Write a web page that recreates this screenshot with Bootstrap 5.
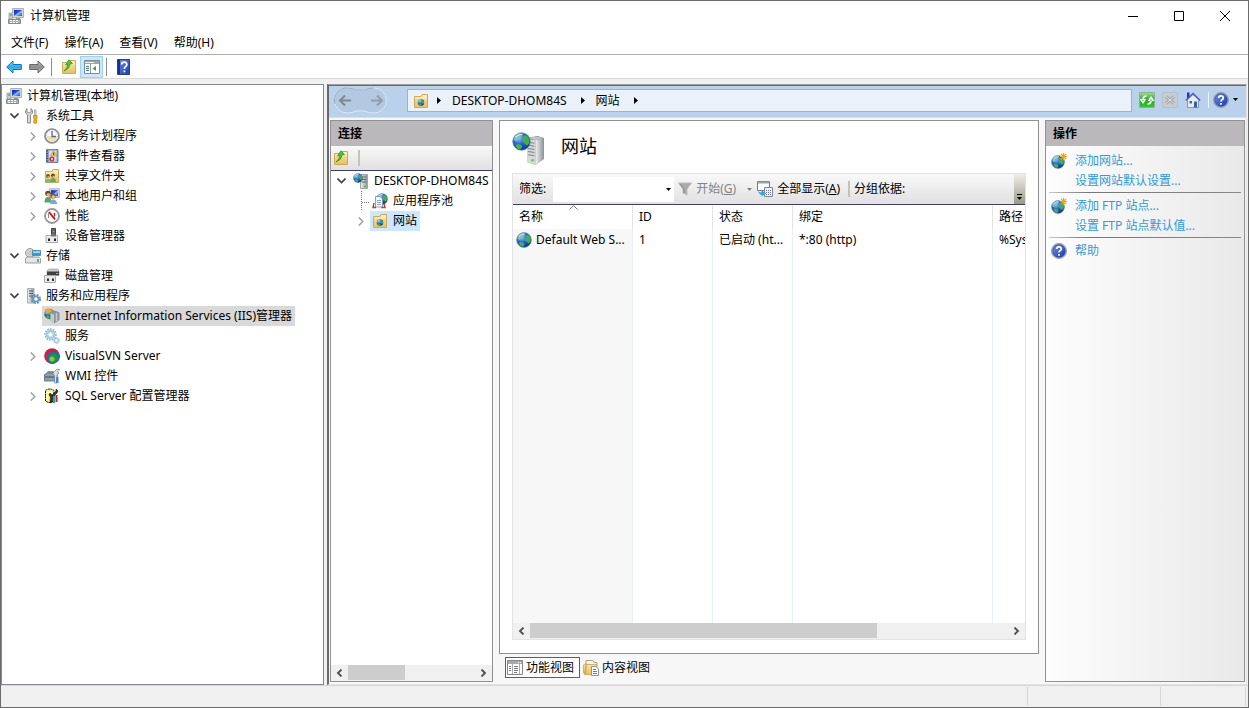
<!DOCTYPE html>
<html lang="zh-CN">
<head>
<meta charset="utf-8">
<meta name="viewport" content="width=device-width, initial-scale=1">
<title>计算机管理</title>
<link rel="stylesheet" href="https://cdn.jsdelivr.net/npm/bootstrap@5.3.0/dist/css/bootstrap.min.css">
<style>
  body { font: 12px/20px "Noto Sans", "Noto Sans CJK SC", sans-serif; color: #000; background: #fff; }
  button, select { font: inherit; color: inherit; background: none; border: 0; padding: 0; border-radius: 0; }
  a { color: inherit; text-decoration: none; }
  ul { list-style: none; margin: 0; padding: 0; }
  svg { display: block; flex: none; }
  .ico { width: 16px; height: 16px; }
  .app { height: 100vh; border: 1px solid #6b6b6b; background: #f0f0f0; }
  .titlebar { height: 29px; padding-left: 7px; background: #fff; }
  .titlebar .ico { margin-right: 6px; }
  .titlebar button { width: 46px; height: 28px; display: grid; place-items: center; }
  .menubar { height: 25px; padding: 2px 0 0 2px; background: #fff; border-bottom: 1px solid #b0b0b0; }
  .menubar button { padding: 0 8px 0 8px; }
  .toolbar { height: 24px; padding: 1px 0 0 1px; background: #fff; border-bottom: 1px solid #d8d8d8; }
  .toolbar button { width: 23px; height: 22px; display: grid; place-items: center; }
  .toolbar .on { background: #cce8ff; border: 1px solid #99d1ff; }
  .vline { width: 1px; height: 18px; background: #8c8c8c; margin: 0 5px 0 3px; }
  .main { padding-top: 5px; gap: 3px; }
  .tree { width: 323px; padding-top: 1px; border: 1px solid #828790; background: #fff; }
  .node { height: 20px; display: flex; align-items: center; white-space: nowrap; }
  .node .twist { width: 18px; height: 20px; display: grid; place-items: center; flex: none; }
  .node a { display: flex; align-items: center; gap: 5px; height: 20px; padding: 0 3px 0 2px; }
  .lv0 { padding-left: 2px; }
  .lv1 { padding-left: 3px; }
  .lv2 { padding-left: 22px; }
  .lv2.leaf { padding-left: 40px; }
  .picked { background: #d9d9d9; }
  .console { border: solid #a0a0a0; border-width: 1px 1px 1px 2px; border-right-color: #e3e3e3; border-bottom-color: #e3e3e3; border-left-color: #696969; background: #f7f7f7; margin-right: 1px; }
  .addressbar { height: 33px; padding: 0 8px 2px 4px; background: #b9d1ea; border-top: 1px solid #696969; border-bottom: 1px solid #d3dfec; }
  .navpill { width: 55px; margin-right: 19px; }
  .crumbs { height: 23px; padding: 0 5px; background: #eaf1fa; border: 1px solid #9db3cc; }
  .crumbs a { padding: 0 14px 0 11px; }
  .barbtns { gap: 7px; padding: 0 0 2px 7px; }
  .panes { padding: 2px 1px 2px; gap: 6px; }
  .pane { border: 1px solid #919191; background: #fff; }
  .conn { width: 163px; flex: none; }
  .acts { width: 200px; flex: none; background: linear-gradient(90deg, #fdfdfd, #e9e9e9); }
  .panehead { font-size: 12px; line-height: 25px; height: 25px; padding-left: 7px; background: #bab8ba; font-weight: 700; margin: 0; }
  .strip { background: linear-gradient(#f9f9f9, #e2e0e2); border-bottom: 1px solid #3f3d69; }
  .conn .strip { height: 25px; padding: 0 2px; gap: 9px; }
  .sep2 { width: 2px; height: 16px; background: #c5c5ae; }
  .conn .twist { width: 19px; }
  .c0 { padding-left: 1px; }
  .c1 { padding-left: 20px; }
  .here { background: #cce8ff; }
  .sbar { height: 16px; background: #f0f0f0; }
  .sbar button { width: 17px; height: 16px; display: grid; place-items: center; flex: none; }
  .thumb { background: #cdcdcd; height: 15px; }
  .sheet { padding: 11px 12px 13px; }
  .sheet h1 { font-size: 18px; line-height: 26px; margin: 0; font-weight: 400; padding-bottom: 6px; }
  .heading { height: 33px; gap: 16px; margin-bottom: 8px; }
  .gridbox { border: 1px solid #e3e3e3; }
  .gridbox .strip { height: 31px; padding-left: 6px; white-space: nowrap; }
  .filter { width: 121px; height: 25px; background: #fff; margin: 0 4px 0 7px; }
  .filter select { width: 100%; height: 25px; appearance: none; padding: 0 16px 0 4px; }
  .filter svg { right: 3px; top: 11px; pointer-events: none; }
  .dim { color: #838383; }
  .drop { margin: 0 5px 0 11px; }
  .more { width: 11px; background: linear-gradient(#efefea, #9a9a84); }
  .sites { width: 100%; height: 100%; table-layout: fixed; border-collapse: separate; border-spacing: 0; }
  .sites th, .sites td { font-weight: 400; padding: 0 0 0 6px; white-space: nowrap; overflow: hidden; border-right: 1px solid #e5f0fb; vertical-align: middle; }
  .sites th { height: 24px; border-color: #e3e3e3; position: relative; }
  .sites th svg { left: 56px; top: 0; }
  .sites td:first-child { background: #f7f7f7; padding-left: 3px; }
  .sites th:last-child, .sites td:last-child { border-right: 0; }
  .sites .line td { height: 22px; }
  .views { height: 28px; padding: 3px 0 0 6px; gap: 1px; }
  .views button { height: 21px; display: flex; align-items: center; gap: 3px; padding: 0 5px 0 1px; border: 1px solid transparent; }
  .views .on { border-color: #0078d7; background: #fff; }
  .acts ul { padding: 5px 3px; }
  .acts a { display: flex; align-items: center; height: 20px; gap: 8px; padding-left: 2px; color: #3399d8; white-space: nowrap; }
  .acts .sub a { padding-left: 26px; }
  .acts .rule { height: 1px; margin: 1px 0 3px; background: linear-gradient(90deg, #c8c8c8, #777 20%, #888); }
  .status { height: 22px; border-top: 1px solid #d7d7d7; }
  .status span { border-right: 1px solid #d7d7d7; margin: 1px 0; }
  .status .wide { width: 133px; }
  .status .slim { width: 85px; margin-right: 2px; }
</style>
</head>
<body>
<svg width="0" height="0" class="position-absolute" aria-hidden="true">
  <defs>
    <radialGradient id="gsea" cx=".35" cy=".3" r=".8"><stop offset="0" stop-color="#8fc4ff"/><stop offset=".45" stop-color="#2a62dc"/><stop offset="1" stop-color="#0b2a80"/></radialGradient>
    <linearGradient id="gfold" x2="0" y2="1"><stop stop-color="#fbe7a6"/><stop offset="1" stop-color="#e8bf62"/></linearGradient>
    <linearGradient id="gmetal"><stop stop-color="#f1f1f1"/><stop offset="1" stop-color="#8b9298"/></linearGradient>
    <linearGradient id="gscr" x2="1" y2="1"><stop stop-color="#0720b8"/><stop offset=".45" stop-color="#2c55ea"/><stop offset=".55" stop-color="#9cc1ff"/><stop offset="1" stop-color="#1c3fd0"/></linearGradient>
    <linearGradient id="gblue" x2="0" y2="1"><stop stop-color="#8be0ff"/><stop offset=".5" stop-color="#28a9e6"/><stop offset="1" stop-color="#7fd6f8"/></linearGradient>
    <linearGradient id="ggray" x2="0" y2="1"><stop stop-color="#c9c9c9"/><stop offset=".5" stop-color="#8c8c8c"/><stop offset="1" stop-color="#b9b9b9"/></linearGradient>
    <linearGradient id="ghelp" x2="1" y2="1"><stop stop-color="#6d8fe8"/><stop offset="1" stop-color="#1c3aa6"/></linearGradient>
    <linearGradient id="ggreen" x2="0" y2="1"><stop stop-color="#9be58c"/><stop offset=".5" stop-color="#24a520"/><stop offset="1" stop-color="#35c92b"/></linearGradient>
    <symbol id="i-globe" viewBox="0 0 16 16"><circle cx="8" cy="8" r="7.4" fill="url(#gsea)" stroke="#6d87ad" stroke-width=".6"/><path d="M1.500 6 3 3 6 1.300 8.500 2 7.500 4 5.500 5 5 7 3 8Z" fill="#7cc8a4"/><path d="M10 3 12.500 3 14.800 6 14.500 9.500 12.500 11.500 11 10 9 8.500 9 6Z" fill="#3fb04a"/><path d="M4 10 7 10.500 8.500 12.500 7 14.800 4.500 13.800 3 12Z" fill="#45b544"/><path d="M3 4.500Q5.500 1.600 9 1.900" stroke="#e0f5ff" fill="none" opacity=".8"/></symbol>
    <symbol id="i-folder" viewBox="0 0 16 16"><path d="M1.500 3.500H8L9 1.500H14.500V14.500H1.500Z" fill="url(#gfold)" stroke="#cfa956"/><path d="M10 3H14M2.500 5H14" stroke="#fff6d0"/></symbol>
    <symbol id="i-foldglobe" viewBox="0 0 16 16"><use href="#i-folder"/><use href="#i-globe" x="4.500" y="6" width="7" height="7"/></symbol>
    <symbol id="i-up" viewBox="0 0 16 16"><use href="#i-folder"/><path d="M3 12Q7 9 6.500 5.500L4.500 5.700 8 .8 11.500 4.600 9 5Q9 9.500 3 12Z" fill="#43c935" stroke="#248f20" stroke-width=".7"/></symbol>
    <symbol id="i-pc" viewBox="0 0 16 16"><path d="M1 5H5V11H1Z" fill="#c4d1ca" stroke="#87928c" stroke-width=".7"/><path d="M4.500 .5H15.500V9.500H4.500Z" fill="#d9d9d4" stroke="#b2b2ad"/><path d="M6 2H14V8H6Z" fill="url(#gscr)"/><path d="M8 10H12L13 12H7Z" fill="#9a9a95"/><path d="M.5 11.500H12.500V15.500H.5Z" fill="#a5b1b7" stroke="#7e8b92"/><path d="M2 12.500H11M2 14.500H11" stroke="#fff" stroke-dasharray="2 1"/><path d="M2 7H4" stroke="#2d9b32"/></symbol>
    <symbol id="i-tools" viewBox="0 0 16 16"><path d="M2 .5V4L4 5 6 4V.5L7.500 2.500V5L5.500 7V15H2.500V7L.7 5V2.500Z" fill="#d8d8d8" stroke="#777" stroke-width=".8"/><path d="M9.500 2H11V7.500H9.500Z" fill="#ddd" stroke="#888" stroke-width=".6"/><path d="M8.500 7.500H12V10L11.300 11 12 14.500 10.200 15.500 8.500 14.500 9.200 11 8.500 10Z" fill="#f3ae1c" stroke="#c78208" stroke-width=".8"/></symbol>
    <symbol id="i-clock" viewBox="0 0 16 16"><circle cx="8" cy="8" r="7" fill="#fafafa" stroke="#8d8d8d" stroke-width="1.700"/><path d="M8 8H3A5 5 0 0 0 13 8Z" fill="#f3dca0"/><circle cx="8" cy="8" r="5.500" fill="none" stroke="#8ea9ca" stroke-width=".7" stroke-dasharray="1 1.800"/><path d="M8 3V8.500H12" fill="none" stroke="#456ca6" stroke-width="1.300"/></symbol>
    <symbol id="i-event" viewBox="0 0 16 16"><path d="M2.500 1.500H14V14.500H2.500Z" fill="#8f9fc4" stroke="#7182a7"/><path d="M5 2.500H12.500V13.500H5Z" fill="#d3dcef"/><path d="M2 3H4M2 5.500H4M2 8H4M2 10.500H4M2 13H4" stroke="#34425f"/><path d="M9.500 2.500 13 8H6.500Z" fill="#ffce29" stroke="#b88b0e" stroke-width=".5"/><path d="M9.700 4.500V7.300" stroke="#333"/><circle cx="7.800" cy="11" r="2.600" fill="#d72733"/><path d="M6.700 10 9 12.200M9 10 6.700 12.200" stroke="#fff" stroke-width=".8"/></symbol>
    <symbol id="i-share" viewBox="0 0 16 16"><use href="#i-folder"/><circle cx="4" cy="8" r="1.900" fill="#7a502c"/><path d="M.8 14.500Q.8 11 4 11T7.200 14.500Z" fill="#78bc91"/><circle cx="9" cy="7.500" r="1.900" fill="#5b4631"/><path d="M6 14Q6 10 9 10T12 14Z" fill="#62aa69"/><path d="M3.500 9H5.500M8.500 8.500H10.500" stroke="#eab98d" stroke-width="1.700"/></symbol>
    <symbol id="i-users" viewBox="0 0 16 16"><path d="M5.500 .8H15.300V9.500H5.500Z" fill="#ddd" stroke="#b0b0ab"/><path d="M7 2.200H14V8.200H7Z" fill="url(#gscr)"/><circle cx="4" cy="5.500" r="2.800" fill="#684628"/><circle cx="4.300" cy="6.700" r="1.800" fill="#e4b17f"/><path d="M.5 14.500Q.5 9 4 9T7.500 14.500Z" fill="#59a566"/><circle cx="9" cy="8" r="2.700" fill="#7d5c40"/><circle cx="9.300" cy="9" r="1.700" fill="#edbd8f"/><path d="M6 16Q6 11.500 9.300 11.500T13.200 16Z" fill="#79aada"/></symbol>
    <symbol id="i-perf" viewBox="0 0 16 16"><circle cx="8" cy="8" r="7" fill="#fff" stroke="#999" stroke-width="1.800"/><path d="M4.500 10V5.500H7L10.500 10.500V5.500" fill="none" stroke="#687078" stroke-width=".8"/><path d="M5 4 11 11.500" stroke="#dd1721" stroke-width="2"/><path d="M10.500 5V8" stroke="#dd1721" stroke-width="1.500"/></symbol>
    <symbol id="i-device" viewBox="0 0 16 16"><path d="M7.500 .5H11.500V8H7.500Z" fill="#626967" stroke="#434745"/><path d="M9 3H10V4H9Z" fill="#59ee4f"/><path d="M2 7.500H13.500V14.500H2Z" fill="#ececec" stroke="#ababab"/><path d="M7 6.500H12V8.500H7Z" fill="#777"/><path d="M4 10.500H6V13H4ZM10 10.500H12V13H10Z" fill="#222"/></symbol>
    <symbol id="i-store" viewBox="0 0 16 16"><circle cx="5" cy="5" r="4.500" fill="#d4d4d0" stroke="#9a9a9a"/><circle cx="5" cy="5" r="1.300" fill="#fff" stroke="#888" stroke-width=".6"/><path d="M7.500 2.500H15.500V7.500H7.500Z" fill="#319bd2" stroke="#457590" stroke-width=".7"/><path d="M8 3.200H15V5H8Z" fill="#8de0fb"/><path d="M2 9H14L15.500 10.500V15H.5V10.500Z" fill="#e3e5e6" stroke="#858b8e" stroke-width=".8"/><path d="M12 11H14V14H12Z" fill="#5cc240"/></symbol>
    <symbol id="i-disk" viewBox="0 0 16 16"><path d="M3 2.500 5 1H14L15 3V7H3Z" fill="#c8cbca" stroke="#989898" stroke-width=".6"/><path d="M3 3.500H15V7.500H3Z" fill="#3c403e"/><path d="M12 5H14V6H12Z" fill="#54e94f"/><path d="M.5 7.500H11.500V14.500H.5Z" fill="#e9e9e9" stroke="#aaa"/><path d="M3 10.500H5V13H3ZM8 10.500H10V13H8Z" fill="#333"/></symbol>
    <symbol id="i-cog" viewBox="0 0 16 16"><circle cx="8" cy="8" r="6.700" fill="none" stroke="#86b1cd" stroke-width="1.900" stroke-dasharray="2 1.350"/><circle cx="8" cy="8" r="4.800" fill="none" stroke="#a5cce2" stroke-width="2.600"/><circle cx="8" cy="8" r="3.200" fill="#fff" stroke="#83abc5" stroke-width=".8"/></symbol>
    <symbol id="i-svc" viewBox="0 0 16 16"><use href="#i-cog" width="13" height="13"/><use href="#i-cog" width="7" height="7" x="9" y="9"/></symbol>
    <symbol id="i-svcapp" viewBox="0 0 16 16"><path d="M2.500 .5H9V15H2.500Z" fill="url(#gmetal)" stroke="#a3aeb6"/><path d="M4 3H8M4 5.500H8M4 8H8" stroke="#52626f"/><circle cx="11" cy="11" r="3.800" fill="none" stroke="#5c8dbb" stroke-width="2.400" stroke-dasharray="1.800 1.200"/><circle cx="11" cy="11" r="2.600" fill="#fff" stroke="#6d9cc6" stroke-width="1.800"/></symbol>
    <symbol id="i-tower" viewBox="0 0 18 28" preserveAspectRatio="none"><path d="M1 2 11 0 17 2V22L9 28 1 25Z" fill="#7a7f82"/><path d="M1 3 9 4V28L1 25Z" fill="#d6d9da"/><path d="M9 4 17 2V22L9 28Z" fill="url(#gmetal)"/><path d="M1 2 10 .5 17 2 9 4Z" fill="#c2c5c6"/><path d="M2 6 8 7M2 9 8 10M2 12 8 13M2 15 8 16M2 18 8 19" stroke="#7d8386"/><path d="M5 23.500H7.500" stroke="#55cf35" stroke-width="2"/></symbol>
    <symbol id="i-iis" viewBox="0 0 16 16"><use href="#i-globe" width="11" height="12"/><path d="M0 2 4 0 9 3 4 5.500Z" fill="#f2a829"/><path d="M6.500 5 11 2.500 15.500 4.500V12L10 15.500 6.500 12.500Z" fill="#8e9599"/><path d="M6.500 5 10 6.500V15.500L6.500 12.500Z" fill="#c5cacc"/><path d="M12.500 5V13" stroke="#c7cccf" stroke-width="1.500"/></symbol>
    <symbol id="i-svn" viewBox="0 0 16 16"><circle cx="8" cy="8" r="7.800" fill="#c92343"/><path d="M15.800 7A7.800 7.800 0 0 1 7 15.800Q3.200 14.500 3 10T8.500 4Q13 3 15.800 7Z" fill="#1476a6"/><path d="M5 10.500Q5.500 6.500 9.500 6T14 10Q12.500 14.500 8 14.800 5 13.500 5 10.500Z" fill="#22953d"/><circle cx="8" cy="11" r="2.500" fill="#91c62f"/></symbol>
    <symbol id="i-wmi" viewBox="0 0 16 16"><path d="M4 6V4H9V6" fill="none" stroke="#627078" stroke-width="1.300"/><path d="M.5 6.500 3 5H13V13H.5Z" fill="#8aa0ae" stroke="#6e7f8b"/><path d="M1 9H13" stroke="#42505b"/><path d="M9 5 13 1 15.500 1.500 13.500 4 15 5 13 6.500V15H10.500V7.500Z" fill="#dde3e8" stroke="#70808c" stroke-width=".7"/><path d="M12 9H14.500V15H12Z" fill="#3f8cda"/></symbol>
    <symbol id="i-sql" viewBox="0 0 16 16"><path d="M1.500 2.500Q5.500-.5 10 2.500V13Q5.500 16 1.500 13Z" fill="#fff07a" stroke="#111" stroke-dasharray="2 .6"/><path d="M2 4Q5 6 9 4M3 6V12" stroke="#fff" fill="none"/><path d="M6 15 6.500 9 5 7 6 5 8 7 12 3 12 1 14 3 13 5 9 9 8.500 14Z" fill="#333" stroke="#000" stroke-width=".5"/><path d="M9 8H11V15H9Z" fill="#1aa9b5"/><path d="M11.500 7H13.500V14H11.500Z" fill="#d81a16"/></symbol>
    <symbol id="i-pool" viewBox="0 0 16 16"><use href="#i-globe" x="4" width="12" height="12"/><path d="M3.500 3.500H8L10.500 6V14H3.500Z" fill="#f4f7fc" stroke="#7789a6" stroke-width=".8"/><path d="M5 7.500H9M5 9.500H9M5 11.500H9" stroke="#6d8dba" stroke-width=".8"/><path d="M2 10 1 14.500H4M12 10.500 13 14.500H9.500" fill="none" stroke="#c33a35" stroke-width="1.400"/></symbol>
    <symbol id="i-server" viewBox="0 0 16 16"><path d="M7.500 1.500H14.500V15.500H7.500Z" fill="url(#gmetal)" stroke="#a1a8ac"/><path d="M8.500 4H13.500M8.500 6.500H13.500M8.500 9H13.500" stroke="#626e72"/><path d="M11 13.500H13" stroke="#4ccd29" stroke-width="1.600"/><use href="#i-globe" y="0" width="10" height="10"/></symbol>
    <symbol id="i-newsite" viewBox="0 0 16 16"><use href="#i-globe" y="2" width="14" height="14"/><path d="M12.500 0V7M9 3.500H16M10 1 15 6M15 1 10 6" stroke="#f2a21f" stroke-width="1.200"/></symbol>
    <symbol id="i-help" viewBox="0 0 16 16"><circle cx="8" cy="8" r="7.200" fill="#23408f" stroke="#8d99ae" stroke-width="1.500"/><circle cx="8" cy="8" r="6" fill="url(#ghelp)"/><path d="M5.700 6Q5.700 3.900 8 3.900T10.300 6Q10.300 7.100 9 7.800 8 8.400 8 9.600M8 11V12.700" fill="none" stroke="#fff" stroke-width="1.700"/></symbol>
    <symbol id="i-down" viewBox="0 0 5 3"><path d="M0 0H5L2.500 3Z" fill="currentColor"/></symbol>
    <symbol id="i-next" viewBox="0 0 4 7"><path d="M0 0 4 3.500 0 7Z"/></symbol>
    <symbol id="i-open" viewBox="0 0 9 6"><path d="M.5 .5 4.500 4.500 8.500 .5" fill="none" stroke="#404040" stroke-width="1.600"/></symbol>
    <symbol id="i-shut" viewBox="0 0 6 9"><path d="M.8 .5 4.800 4.500 .8 8.500" fill="none" stroke="#a0a0a0" stroke-width="1.500"/></symbol>
    <symbol id="i-sl" viewBox="0 0 7 8"><path d="M5.500 .5 2 4 5.500 7.500" fill="none" stroke="#505050" stroke-width="1.900"/></symbol>
    <symbol id="i-sr" viewBox="0 0 7 8"><path d="M1.500 .5 5 4 1.500 7.500" fill="none" stroke="#505050" stroke-width="1.900"/></symbol>
  </defs>
</svg>

<div class="app d-flex flex-column overflow-hidden">
  <header>
    <div class="titlebar d-flex align-items-center">
      <svg class="ico"><use href="#i-pc"/></svg>
      <span class="me-auto">计算机管理</span>
      <button aria-label="最小化"><svg width="10" height="10"><path d="M0 5.500H10" stroke="#000"/></svg></button>
      <button aria-label="最大化"><svg width="10" height="10"><path d="M.5 .5H9.500V9.500H.5Z" fill="none" stroke="#000"/></svg></button>
      <button aria-label="关闭"><svg width="10" height="10"><path d="M0 0 10 10M10 0 0 10" stroke="#000"/></svg></button>
    </div>
    <nav class="menubar d-flex align-items-center">
      <button>文件(F)</button><button>操作(A)</button><button>查看(V)</button><button>帮助(H)</button>
    </nav>
    <div class="toolbar d-flex align-items-center">
      <button aria-label="后退"><svg class="ico" viewBox="0 0 16 16"><path d="M.7 8 7 2V5.500H15.300V10.500H7V14Z" fill="url(#gblue)" stroke="#1272b8"/></svg></button>
      <button aria-label="前进"><svg class="ico" viewBox="0 0 16 16"><path d="M15.300 8 9 2V5.500H.7V10.500H9V14Z" fill="url(#ggray)" stroke="#686868"/></svg></button>
      <span class="vline"></span>
      <button aria-label="上移"><svg class="ico"><use href="#i-up"/></svg></button>
      <button class="on" aria-label="显示控制台树"><svg class="ico" viewBox="0 0 16 16"><path d="M.5 1.500H15.500V14.500H.5Z" fill="#fff" stroke="#85898e"/><path d="M1 2H15V5H1Z" fill="#a5a8ab"/><path d="M1 3.500H10" stroke="#eee"/><path d="M6.500 5V14" stroke="#999"/><path d="M2 7.500H5M2 9.500H5M2 11.500H5" stroke="#3b78b8"/><path d="M12 7V12L8.500 9.500Z" fill="#32a929"/></svg></button>
      <span class="vline"></span>
      <button aria-label="帮助"><svg class="ico" viewBox="0 0 16 16"><path d="M1.500 .5H13.500V15.500H1.500Z" fill="url(#ghelp)" stroke="#263d91"/><path d="M3 1V15" stroke="#16308d" stroke-width="2"/><path d="M5.700 5.600Q5.700 3.200 8.300 3.200T10.800 5.500Q10.800 6.900 9.500 7.600 8.400 8.300 8.400 10M8.400 11.500V13.200" fill="none" stroke="#fff" stroke-width="1.700"/></svg></button>
    </div>
  </header>

  <main class="main d-flex flex-fill" style="min-height:0">
    <aside class="tree flex-shrink-0 overflow-hidden">
      <ul>
        <li class="node lv0"><a href="#"><svg class="ico"><use href="#i-pc"/></svg>计算机管理(本地)</a></li>
        <li class="node lv1"><button class="twist" aria-label="折叠"><svg width="9" height="6"><use href="#i-open"/></svg></button><a href="#"><svg class="ico"><use href="#i-tools"/></svg>系统工具</a></li>
        <li class="node lv2"><button class="twist" aria-label="展开"><svg width="6" height="9"><use href="#i-shut"/></svg></button><a href="#"><svg class="ico"><use href="#i-clock"/></svg>任务计划程序</a></li>
        <li class="node lv2"><button class="twist" aria-label="展开"><svg width="6" height="9"><use href="#i-shut"/></svg></button><a href="#"><svg class="ico"><use href="#i-event"/></svg>事件查看器</a></li>
        <li class="node lv2"><button class="twist" aria-label="展开"><svg width="6" height="9"><use href="#i-shut"/></svg></button><a href="#"><svg class="ico"><use href="#i-share"/></svg>共享文件夹</a></li>
        <li class="node lv2"><button class="twist" aria-label="展开"><svg width="6" height="9"><use href="#i-shut"/></svg></button><a href="#"><svg class="ico"><use href="#i-users"/></svg>本地用户和组</a></li>
        <li class="node lv2"><button class="twist" aria-label="展开"><svg width="6" height="9"><use href="#i-shut"/></svg></button><a href="#"><svg class="ico"><use href="#i-perf"/></svg>性能</a></li>
        <li class="node lv2 leaf"><a href="#"><svg class="ico"><use href="#i-device"/></svg>设备管理器</a></li>
        <li class="node lv1"><button class="twist" aria-label="折叠"><svg width="9" height="6"><use href="#i-open"/></svg></button><a href="#"><svg class="ico"><use href="#i-store"/></svg>存储</a></li>
        <li class="node lv2 leaf"><a href="#"><svg class="ico"><use href="#i-disk"/></svg>磁盘管理</a></li>
        <li class="node lv1"><button class="twist" aria-label="折叠"><svg width="9" height="6"><use href="#i-open"/></svg></button><a href="#"><svg class="ico"><use href="#i-svcapp"/></svg>服务和应用程序</a></li>
        <li class="node lv2 leaf"><a href="#" class="picked"><svg class="ico"><use href="#i-iis"/></svg>Internet Information Services (IIS)管理器</a></li>
        <li class="node lv2 leaf"><a href="#"><svg class="ico"><use href="#i-svc"/></svg>服务</a></li>
        <li class="node lv2"><button class="twist" aria-label="展开"><svg width="6" height="9"><use href="#i-shut"/></svg></button><a href="#"><svg class="ico"><use href="#i-svn"/></svg>VisualSVN Server</a></li>
        <li class="node lv2 leaf"><a href="#"><svg class="ico"><use href="#i-wmi"/></svg>WMI 控件</a></li>
        <li class="node lv2"><button class="twist" aria-label="展开"><svg width="6" height="9"><use href="#i-shut"/></svg></button><a href="#"><svg class="ico"><use href="#i-sql"/></svg>SQL Server 配置管理器</a></li>
      </ul>
    </aside>

    <section class="console flex-fill d-flex flex-column">
      <div class="addressbar d-flex align-items-center">
        <svg class="navpill" height="27" viewBox="0 0 55 27"><path d="M14 1Q20 1 23 3H32Q35 1 41 1A12.500 12.500 0 0 1 41 26Q35 26 32 24H23Q20 26 14 26A12.500 12.500 0 0 1 14 1Z" fill="#b3c9e1" stroke="#dce8f5"/><path d="M2 17A12.500 12.500 0 0 1 14 1Q20 1 23 3H32Q35 1 41 1" fill="none" stroke="#93a9c2"/><path d="M7 13.500H18M12 8.500 7 13.500 12 18.500" fill="none" stroke="#83888e" stroke-width="2"/><path d="M38 13.500H49M44 8.500 49 13.500 44 18.500" fill="none" stroke="#949ca6" stroke-width="2"/></svg>
        <nav class="crumbs flex-fill d-flex align-items-center" aria-label="地址">
          <svg class="ico me-2"><use href="#i-foldglobe"/></svg>
          <svg width="4" height="7"><use href="#i-next"/></svg>
          <a href="#">DESKTOP-DHOM84S</a>
          <svg width="4" height="7"><use href="#i-next"/></svg>
          <a href="#">网站</a>
          <svg width="4" height="7"><use href="#i-next"/></svg>
        </nav>
        <div class="barbtns d-flex align-items-center">
          <button aria-label="刷新"><svg class="ico" viewBox="0 0 16 16"><path d="M.5 .5H15.500V15.500H.5Z" fill="url(#ggreen)" stroke="#8fb08d"/><path d="M7.500 4Q4 4 4 8M1.500 7 4 10.500 6.500 7M8.500 12Q12 12 12 8.500M9.500 9 12 5.500 14.500 9" fill="none" stroke="#fff" stroke-width="1.700"/></svg></button>
          <button aria-label="停止"><svg class="ico" viewBox="0 0 16 16"><path d="M.5 .5H15.500V15.500H.5Z" fill="#c9cdd1" stroke="#b5bfca"/><path d="M4 4.500 12 11.500M12 4.500 4 11.500" stroke="#a3a8ad" stroke-width="3"/><path d="M4 4.500 12 11.500M12 4.500 4 11.500" stroke="#e5e5e5"/></svg></button>
          <button aria-label="主页"><svg class="ico" viewBox="0 0 16 16"><path d="M2.500 7.500V15.500H13.500V7.500L8 2.500Z" fill="#e6ebf0" stroke="#808692" stroke-width=".8"/><path d="M2 .5H4.500V6H2Z" fill="#2334c4"/><path d="M.8 8.500 8 1.500 15.200 8.500" fill="none" stroke="#4a5ab8" stroke-width="1.500"/><path d="M9 9.500H12V15.500H9Z" fill="#2f62b8"/><path d="M4.500 9H7V11.500H4.500Z" fill="#5b6475"/></svg></button>
          <div class="d-flex align-items-center gap-1">
            <span class="vr bg-white opacity-75"></span>
            <button class="d-flex align-items-center gap-1" aria-label="帮助"><svg class="ico"><use href="#i-help"/></svg><svg width="5" height="3"><use href="#i-down"/></svg></button>
          </div>
        </div>
      </div>

      <div class="panes d-flex flex-fill" style="min-height:0">
        <section class="pane conn d-flex flex-column overflow-hidden">
          <h2 class="panehead">连接</h2>
          <div class="strip d-flex align-items-center"><button aria-label="上移"><svg class="ico"><use href="#i-up"/></svg></button><span class="sep2"></span></div>
          <ul class="flex-fill overflow-hidden">
            <li class="node c0"><button class="twist" aria-label="折叠"><svg width="9" height="6"><use href="#i-open"/></svg></button><a href="#"><svg class="ico"><use href="#i-server"/></svg>DESKTOP-DHOM84S</a></li>
            <li class="node c1"><svg class="twist" viewBox="0 0 19 20"><path d="M10.500 0V20M11 11.500H19" stroke="#777" stroke-dasharray="1 1"/></svg><a href="#"><svg class="ico"><use href="#i-pool"/></svg>应用程序池</a></li>
            <li class="node c1"><button class="twist" aria-label="展开"><svg width="6" height="9"><use href="#i-shut"/></svg></button><a href="#" class="here"><svg class="ico"><use href="#i-foldglobe"/></svg>网站</a></li>
          </ul>
          <div class="sbar d-flex"><button aria-label="向左"><svg width="7" height="8"><use href="#i-sl"/></svg></button><div class="flex-fill"><div class="thumb" style="width:45%"></div></div><button aria-label="向右"><svg width="7" height="8"><use href="#i-sr"/></svg></button></div>
        </section>

        <div class="flex-fill d-flex flex-column" style="min-width:0">
          <section class="pane sheet flex-fill d-flex flex-column" style="min-height:0">
            <div class="heading d-flex align-items-center">
              <svg width="33" height="33" viewBox="0 0 33 33"><use href="#i-tower" x="14" y="4" width="19" height="29"/><use href="#i-globe" width="19" height="19"/></svg>
              <h1>网站</h1>
            </div>
            <div class="gridbox flex-fill d-flex flex-column" style="min-height:0">
              <div class="strip d-flex align-items-center">
                <label for="flt">筛选:</label>
                <div class="filter position-relative"><select id="flt"><option></option></select><svg class="position-absolute" width="5" height="3"><use href="#i-down"/></svg></div>
                <button class="dim d-flex align-items-center gap-1"><svg width="14" height="14" viewBox="0 0 14 14"><path d="M.5 1H13.500L9 7V13L5 11V7Z" fill="#aaa" stroke="#bcbcbc"/><path d="M2 2 6 7V11" stroke="#888" fill="none"/></svg><span>开始(<u>G</u>)</span></button>
                <svg class="dim drop" width="5" height="3"><use href="#i-down"/></svg>
                <button class="d-flex align-items-center gap-1"><svg class="ico" viewBox="0 0 16 16"><path d="M.5 .5H12.500V9.500H.5Z" fill="#fff" stroke="#777d85"/><path d="M1 1.500H12" stroke="#9da5ae" stroke-width="2"/><path d="M7.500 6.500H15.500V15.500H7.500Z" fill="#eef" stroke="#838994"/><path d="M9 9.500H15M9 11.500H15M9 13.500H15" stroke="#7777a5" stroke-dasharray="1 1"/><path d="M1 8Q1 11.500 4.500 11.500V9L9 12.500 4.500 15.500V14Q1 13 1 8Z" fill="#2ba7e3"/></svg><span>全部显示(<u>A</u>)</span></button>
                <span class="sep2 ms-2 me-1"></span>
                <span>分组依据:</span>
                <button class="more ms-auto align-self-stretch d-flex align-items-end justify-content-center pb-1" aria-label="更多"><svg width="6" height="6"><path d="M0 .5H5" stroke="#000"/><path d="M0 3H5L2.500 6Z"/></svg></button>
              </div>
              <div class="flex-fill overflow-hidden">
                <table class="sites">
                  <colgroup><col style="width:120px"><col style="width:80px"><col style="width:80px"><col style="width:200px"><col></colgroup>
                  <thead><tr><th>名称<svg class="position-absolute" width="9" height="5"><path d="M.5 4.500 4.500 .5 8.500 4.500" fill="none" stroke="#777"/></svg></th><th>ID</th><th>状态</th><th>绑定</th><th>路径</th></tr></thead>
                  <tbody>
                    <tr class="line"><td><a href="#" class="d-flex align-items-center gap-1"><svg class="ico"><use href="#i-globe"/></svg>Default Web S...</a></td><td>1</td><td>已启动 (ht...</td><td>*:80 (http)</td><td>%Sys</td></tr>
                    <tr><td></td><td></td><td></td><td></td><td></td></tr>
                  </tbody>
                </table>
              </div>
              <div class="sbar d-flex"><button aria-label="向左"><svg width="7" height="8"><use href="#i-sl"/></svg></button><div class="flex-fill"><div class="thumb" style="width:72.500%"></div></div><button aria-label="向右"><svg width="7" height="8"><use href="#i-sr"/></svg></button></div>
            </div>
          </section>
          <div class="views d-flex align-items-start">
            <button class="on"><svg class="ico" viewBox="0 0 16 16"><path d="M.5 .5H15.500V14.500H.5Z" fill="#fff" stroke="#83878c"/><path d="M1 2.500H15" stroke="#a6abb0" stroke-width="3"/><path d="M11 2.500H14" stroke="#fff" stroke-dasharray="1 1"/><path d="M5.500 4V14M12.500 4V14" stroke="#aaa"/><path d="M2 6.500H4M2 8.500H4M2 10.500H4M7 6.500H11M7 8.500H11M7 10.500H11M7 12.500H10" stroke="#777"/></svg>功能视图</button>
            <button><svg class="ico" viewBox="0 0 16 16"><path d="M3 .5H10L11 2.500H14V9H3Z" fill="#faf5e4" stroke="#aaa18c"/><path d="M.5 5 3 3.500V13H.5ZM3 4.500H13.500V14.500H1.500Z" fill="url(#gfold)" stroke="#c39b45" stroke-width=".7"/><path d="M8.500 6.500H13L15.500 9V15.500H8.500Z" fill="#fff" stroke="#7f95b5"/><path d="M10 9.500H13M10 11.500H14M10 13.500H14" stroke="#4388cb"/></svg>内容视图</button>
          </div>
        </div>

        <section class="pane acts">
          <h2 class="panehead">操作</h2>
          <ul>
            <li><a href="#"><svg class="ico"><use href="#i-newsite"/></svg>添加网站...</a></li>
            <li class="sub"><a href="#">设置网站默认设置...</a></li>
            <li class="rule"></li>
            <li><a href="#"><svg class="ico"><use href="#i-newsite"/></svg>添加 FTP 站点...</a></li>
            <li class="sub"><a href="#">设置 FTP 站点默认值...</a></li>
            <li class="rule"></li>
            <li><a href="#"><svg class="ico"><use href="#i-help"/></svg>帮助</a></li>
          </ul>
        </section>
      </div>
    </section>
  </main>

  <footer class="status d-flex">
    <span class="flex-fill"></span><span class="wide"></span><span class="slim"></span>
  </footer>
</div>
<script src="https://cdn.jsdelivr.net/npm/bootstrap@5.3.0/dist/js/bootstrap.bundle.min.js"></script>
</body>
</html>
